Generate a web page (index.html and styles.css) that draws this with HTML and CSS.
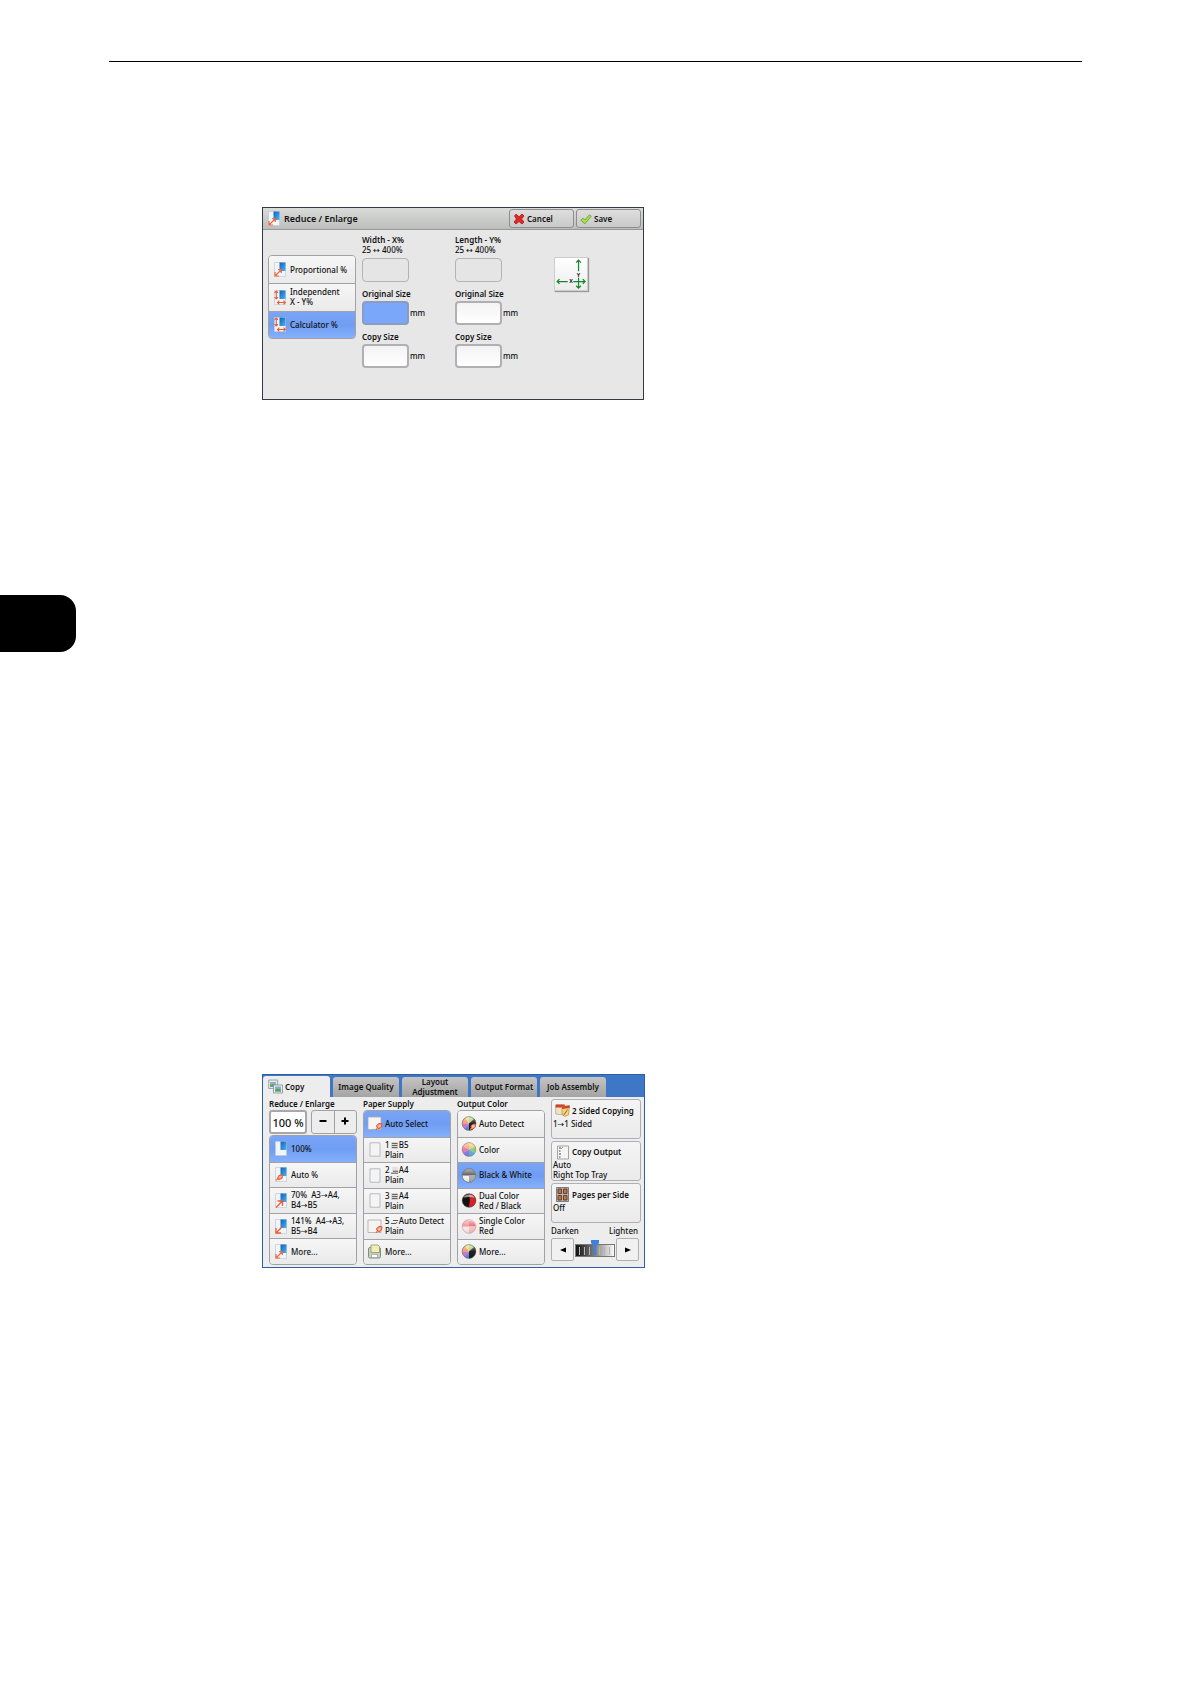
FILE: index.html
```html
<!DOCTYPE html>
<html lang="en">
<head>
<meta charset="utf-8">
<meta name="viewport" content="width=device-width, initial-scale=1">
<title>Reduce / Enlarge</title>
<link rel="stylesheet" href="styles.css">
</head>
<body>
<svg class="defs" aria-hidden="true">
  <defs>
    <linearGradient id="g-blue" x1="0" y1="0" x2="1" y2="1"><stop offset="0" stop-color="#0b62b8"/><stop offset="1" stop-color="#4db2f2"/></linearGradient>
    <linearGradient id="g-gloss" x1="0" y1="0" x2="0" y2="1"><stop offset="0" stop-color="#fff" stop-opacity=".6"/><stop offset=".5" stop-color="#fff" stop-opacity=".05"/><stop offset="1" stop-color="#000" stop-opacity=".1"/></linearGradient>
    <symbol id="page" viewBox="0 0 12 15"><path d="M.5.500h11v14H.5z" fill="#f1f5f9" stroke="#c3c9d0" stroke-width=".7"/><path d="M5.500.5h6v8.500h-6z" fill="url(#g-blue)"/></symbol>
    <symbol id="page-both" viewBox="0 0 12 15"><use href="#page"/><path d="M1.500 13.500L7 8M1 10V14H5M4 7.500H7.300V11" fill="none" stroke="#ee6a3c" stroke-width="1.200"/></symbol>
    <symbol id="page-up" viewBox="0 0 12 15"><use href="#page"/><path d="M1 14.500L7 8.500M2.500 8H7.500V13" fill="none" stroke="#ee5a30" stroke-width="1.300"/></symbol>
    <symbol id="page-down" viewBox="0 0 12 15"><use href="#page"/><path d="M7.500 7.500L1.500 13.500M1 9V14H6" fill="none" stroke="#ee5a30" stroke-width="1.300"/></symbol>
    <symbol id="page-auto" viewBox="0 0 12 15"><use href="#page"/><path d="M1 13.500L3 11M2.500 11.500L4 8.500 7.500 8 7 11 4 12.500z" fill="#f7b09a" stroke="#e8603c" stroke-width="1.200"/></symbol>
    <symbol id="page-xy" viewBox="0 0 12 15"><use href="#page"/><path d="M2.300 1V9M.6 2.800L2.300 1 4 2.800M.6 7.200L2.300 9 4 7.200M3.500 12.500H11.300M5.300 10.700L3.500 12.500 5.300 14.300M9.500 10.700L11.300 12.500 9.500 14.300" fill="none" stroke="#ee5a30" stroke-width="1.100"/></symbol>
    <symbol id="sheet" viewBox="0 0 15 15"><path d="M2.500.8h10v13.400h-10z" fill="#f4f4f4" stroke="#a9adb2" stroke-width=".8"/></symbol>
    <symbol id="sheet-auto" viewBox="0 0 15 15"><path d="M.5 1h13v12.500H.5z" fill="#f6f4f2" stroke="#a9a9a9" stroke-width=".8"/><path d="M8.500 14L10 11.500M9 9.500L11.500 7.500 14.500 7.800 14 11 11.500 13 9.500 11.500z" fill="#f49a80" stroke="#e4552e"/><path d="M11 11L13 9" stroke="#fff" stroke-width=".8"/></symbol>
    <symbol id="sheet-more" viewBox="0 0 15 15"><rect x="1" y="3.500" width="12" height="10.500" rx="1.500" fill="#c3d3c3" stroke="#7e8d80"/><path d="M3.500 1h7l1.500 1.500v6H3.500z" fill="#f2edb0" stroke="#8b9377" stroke-width=".8"/><path d="M4 10.500h6v3H4z" fill="#fff" stroke="#8b9377" stroke-width=".6"/></symbol>
    <symbol id="tray" viewBox="0 0 7 7"><path d="M0 0h7v7H0z" fill="#d4d4d4"/><path d="M1 1.500h5.500M1 3.500h5.500M1 5.500h5.500" stroke="#666"/></symbol>
    <symbol id="tray-low" viewBox="0 0 7 7"><path d="M1 0h6v6H1z" fill="#e2e2e2"/><path d="M0 6.200h7M2 4.200h5" stroke="#555"/></symbol>
    <symbol id="bypass" viewBox="0 0 7 7"><path d="M2 2.500h5M0 5.500h5L6 4" fill="none" stroke="#555"/></symbol>
    <symbol id="wheel" viewBox="0 0 16 16"><path d="M8 8V.5A7.500 7.500 0 0 1 14.500 4.300z" fill="#efc65a"/><path d="M8 8L14.500 4.300A7.500 7.500 0 0 1 14.500 11.700z" fill="#8ace6a"/><path d="M8 8L14.500 11.700A7.500 7.500 0 0 1 8 15.500z" fill="#58b2e6"/><path d="M8 8V15.500A7.500 7.500 0 0 1 1.500 11.700z" fill="#8d7be0"/><path d="M8 8L1.500 11.700A7.500 7.500 0 0 1 1.500 4.300z" fill="#ee6fae"/><path d="M8 8L1.500 4.300A7.500 7.500 0 0 1 8 .5z" fill="#f09a6e"/></symbol>
    <symbol id="wheel-warm" viewBox="0 0 16 16"><path d="M8 8L.5 8A7.500 7.500 0 0 1 4 1.700z" fill="#f08f5c"/><path d="M8 8L4 1.700A7.500 7.500 0 0 1 8 .5z" fill="#f2d45c"/><path d="M8 8V.5A7.500 7.500 0 0 1 13.500 3z" fill="#9ad06a"/><path d="M8 8L.5 8A7.500 7.500 0 0 0 3 13.500z" fill="#d86fc0"/><path d="M8 8L3 13.500A7.500 7.500 0 0 0 8 15.500z" fill="#6a86e0"/></symbol>
    <symbol id="color" viewBox="0 0 16 16"><use href="#wheel"/><circle cx="8" cy="8" r="7.300" fill="url(#g-gloss)" stroke="#8d8580" stroke-width=".6"/></symbol>
    <symbol id="color-black" viewBox="0 0 16 16"><use href="#wheel-warm"/><path d="M8 8L13.500 3A7.500 7.500 0 0 1 8 15.500z" fill="#151515"/><circle cx="8" cy="8" r="7.300" fill="url(#g-gloss)" stroke="#666" stroke-width=".6"/></symbol>
    <symbol id="color-auto" viewBox="0 0 16 16"><use href="#wheel-warm"/><path d="M8 8L13.500 3A7.500 7.500 0 0 1 8 15.500z" fill="#151515"/><circle cx="8" cy="8" r="7.300" fill="url(#g-gloss)" stroke="#666" stroke-width=".6"/><path d="M9 14.500L10.500 12 10 10.500 13 8.500 15 9 14.500 12 12 13.500z" fill="#fbc39a" stroke="#d8502c" stroke-width=".9"/></symbol>
    <symbol id="bw" viewBox="0 0 16 16"><circle cx="8" cy="8" r="7.300" fill="#f5f5f5"/><path d="M.7 8A7.300 7.300 0 0 1 15.300 8z" fill="#555"/><path d="M8 8h7.300A7.300 7.300 0 0 1 8 15.300z" fill="#aaa"/><circle cx="8" cy="8" r="7.300" fill="url(#g-gloss)" stroke="#666" stroke-width=".7"/></symbol>
    <symbol id="dual" viewBox="0 0 16 16"><circle cx="8" cy="8" r="7.300" fill="#101010"/><path d="M9 7h6.300A7.300 7.300 0 0 1 8 15.300z" fill="#df1c22"/><path d="M8 .7A7.300 7.300 0 0 1 15.300 8L9 8z" fill="#c8262a"/><path d="M2 5A7 7 0 0 1 14 5Q8 3.500 2 5z" fill="#fff" opacity=".55"/><circle cx="8" cy="8" r="7.300" fill="none" stroke="#555" stroke-width=".6"/></symbol>
    <symbol id="single" viewBox="0 0 16 16"><circle cx="8" cy="8" r="7.300" fill="#fbe9e8"/><path d="M.7 8A7.300 7.300 0 0 1 8 .7L8 8z" fill="#ef8d90"/><path d="M8 2a7 7 0 0 1 7.300 6H8z" fill="#e6666c"/><path d="M8 8h7.300A7.300 7.300 0 0 1 8 15.300z" fill="#f6c3c3"/><circle cx="8" cy="8" r="7.300" fill="url(#g-gloss)" stroke="#c98e8e" stroke-width=".6"/></symbol>
  </defs>
</svg>

<hr class="page-rule">

<main>
  <section class="panel dialog" aria-label="Reduce / Enlarge">
    <header class="dialog-bar">
      <svg class="icon-page" aria-hidden="true"><use href="#page-both"/></svg>
      <h1>Reduce / Enlarge</h1>
      <button type="button" class="bar-button">
        <svg viewBox="0 0 12 12" aria-hidden="true"><path d="M1.500 3L3 1.200 6 3.800 9 1 11 3 8.500 6 11 9 9 11 6 8.500 3 11 1 9 3.500 6z" fill="#e02a2a" stroke="#a81414" stroke-width=".8"/></svg>Cancel
      </button>
      <button type="button" class="bar-button">
        <svg viewBox="0 0 12 12" aria-hidden="true"><path d="M.8 7.200L3 5.200 4.700 7 9.500 1.800 11.300 3.200 4.800 10.800z" fill="#a6e04a" stroke="#5f9c20" stroke-width=".8"/></svg>Save
      </button>
    </header>
    <div class="dialog-body">
      <div class="list mode-list">
        <button type="button" class="item"><svg class="icon-page" aria-hidden="true"><use href="#page-both"/></svg><span>Proportional %</span></button>
        <button type="button" class="item"><svg class="icon-page" aria-hidden="true"><use href="#page-xy"/></svg><span>Independent<br>X - Y%</span></button>
        <button type="button" class="item selected" aria-pressed="true"><svg class="icon-page" aria-hidden="true"><use href="#page-xy"/></svg><span>Calculator %</span></button>
      </div>
      <div class="measures">
        <div class="field"><label for="wx">Width - X%</label><span>25 <span class="arrow">↔</span> 400%</span><input id="wx" class="readout" readonly></div>
        <div class="field"><label for="wo">Original Size</label><div class="with-unit"><input id="wo" class="active"><span>mm</span></div></div>
        <div class="field"><label for="wc">Copy Size</label><div class="with-unit"><input id="wc"><span>mm</span></div></div>
      </div>
      <div class="measures">
        <div class="field"><label for="ly">Length - Y%</label><span>25 <span class="arrow">↔</span> 400%</span><input id="ly" class="readout" readonly></div>
        <div class="field"><label for="lo">Original Size</label><div class="with-unit"><input id="lo"><span>mm</span></div></div>
        <div class="field"><label for="lc">Copy Size</label><div class="with-unit"><input id="lc"><span>mm</span></div></div>
      </div>
      <svg class="axes" viewBox="0 0 34 34" role="img" aria-label="X and Y directions">
        <path d="M25 2V14M25 21V32M22.500 5L25 2.300 27.500 5M22.500 29.500L25 32 27.500 29.500M2 25H13.500M19.500 25H32M4.800 22.500L2.300 25 4.800 27.500M29.500 22.500L32 25 29.500 27.500" fill="none" stroke="#16862e" stroke-width="1.300"/>
        <text x="25" y="20" text-anchor="middle">Y</text><text x="17" y="27" text-anchor="middle">X</text>
      </svg>
    </div>
  </section>

  <div class="thumb-index"></div>

  <section class="panel copy" aria-label="Copy">
    <nav class="tabs">
      <button type="button" class="tab current" aria-current="page">
        <svg viewBox="0 0 15 15" aria-hidden="true"><path d="M.7 1h9v8.500h-9z" fill="#e4e8ea" stroke="#8c969c" stroke-width=".8"/><path d="M2 3h6v5H2z" fill="#86b3cf"/><path d="M2 6l3-1 3 2v1H2z" fill="#6aa05a"/><path d="M5.500 6h9v8h-9z" fill="#eef0f0" stroke="#7d8a90" stroke-width=".8"/><path d="M7 7.500h6v5H7z" fill="#7cb1d4"/><path d="M7 11l3-1.500 3 1.500v1.500H7z" fill="#5f9a4e"/></svg>Copy</button>
      <button type="button" class="tab">Image Quality</button>
      <button type="button" class="tab">Layout<br>Adjustment</button>
      <button type="button" class="tab">Output Format</button>
      <button type="button" class="tab">Job Assembly</button>
    </nav>
    <div class="copy-body">
      <section class="column">
        <h2><label for="ratio">Reduce / Enlarge</label></h2>
        <div class="ratio">
          <input id="ratio" value="100 %">
          <div class="stepper"><button type="button" aria-label="Decrease"><svg viewBox="0 0 8 8" aria-hidden="true"><path d="M.5 4h7"/></svg></button><button type="button" aria-label="Increase"><svg viewBox="0 0 8 8" aria-hidden="true"><path d="M.5 4h7M4 .5v7"/></svg></button></div>
        </div>
        <div class="list">
          <button type="button" class="item selected" aria-pressed="true"><svg class="icon-page" aria-hidden="true"><use href="#page"/></svg><span>100%</span></button>
          <button type="button" class="item"><svg class="icon-page" aria-hidden="true"><use href="#page-auto"/></svg><span>Auto %</span></button>
          <button type="button" class="item"><svg class="icon-page" aria-hidden="true"><use href="#page-up"/></svg><span>70%&nbsp; A3<span class="arrow">→</span>A4,<br>B4<span class="arrow">→</span>B5</span></button>
          <button type="button" class="item"><svg class="icon-page" aria-hidden="true"><use href="#page-down"/></svg><span>141%&nbsp; A4<span class="arrow">→</span>A3,<br>B5<span class="arrow">→</span>B4</span></button>
          <button type="button" class="item"><svg class="icon-page" aria-hidden="true"><use href="#page-both"/></svg><span>More...</span></button>
        </div>
      </section>
      <section class="column">
        <h2>Paper Supply</h2>
        <div class="list square">
          <button type="button" class="item selected" aria-pressed="true"><svg aria-hidden="true"><use href="#sheet-auto"/></svg><span>Auto Select</span></button>
          <button type="button" class="item"><svg aria-hidden="true"><use href="#sheet"/></svg><span>1 <svg class="tray" aria-hidden="true"><use href="#tray"/></svg> B5<br>Plain</span></button>
          <button type="button" class="item"><svg aria-hidden="true"><use href="#sheet"/></svg><span>2 <svg class="tray" aria-hidden="true"><use href="#tray-low"/></svg> A4<br>Plain</span></button>
          <button type="button" class="item"><svg aria-hidden="true"><use href="#sheet"/></svg><span>3 <svg class="tray" aria-hidden="true"><use href="#tray"/></svg> A4<br>Plain</span></button>
          <button type="button" class="item"><svg aria-hidden="true"><use href="#sheet-auto"/></svg><span>5 <svg class="tray" aria-hidden="true"><use href="#bypass"/></svg> Auto Detect<br>Plain</span></button>
          <button type="button" class="item"><svg aria-hidden="true"><use href="#sheet-more"/></svg><span>More...</span></button>
        </div>
      </section>
      <section class="column">
        <h2>Output Color</h2>
        <div class="list square">
          <button type="button" class="item"><svg aria-hidden="true"><use href="#color-auto"/></svg><span>Auto Detect</span></button>
          <button type="button" class="item"><svg aria-hidden="true"><use href="#color"/></svg><span>Color</span></button>
          <button type="button" class="item selected" aria-pressed="true"><svg aria-hidden="true"><use href="#bw"/></svg><span>Black &amp; White</span></button>
          <button type="button" class="item"><svg aria-hidden="true"><use href="#dual"/></svg><span>Dual Color<br>Red / Black</span></button>
          <button type="button" class="item"><svg aria-hidden="true"><use href="#single"/></svg><span>Single Color<br>Red</span></button>
          <button type="button" class="item"><svg aria-hidden="true"><use href="#color-black"/></svg><span>More...</span></button>
        </div>
      </section>
      <section class="options">
        <button type="button" class="card">
          <span class="card-title"><svg viewBox="0 0 15 15" aria-hidden="true"><path d="M.7 2h9v10l-9-1z" fill="#f4e3c0" stroke="#a89c88" stroke-width=".7"/><path d="M.7 1.500h9v3h-9z" fill="#d0402c"/><path d="M7 3.500l7.500-1-1 9.500-4 1.500L7 11z" fill="#f3d876" stroke="#a89048" stroke-width=".7"/><path d="M7 3.500l7.500-1v2.500L7 6z" fill="#d0402c"/><path d="M8.500 12.500l4-6" stroke="#c0512c"/></svg>2 Sided Copying</span>
          <span>1<span class="arrow">→</span>1 Sided</span>
        </button>
        <button type="button" class="card">
          <span class="card-title"><svg viewBox="0 0 15 15" aria-hidden="true"><path d="M2.500 1h11v13h-11z" fill="#f5f5f5" stroke="#8f8f8f" stroke-width=".8"/><path d="M4 3h2M4 6h1.500M4 9h2M4 12h1.500M7.500 2.500l-1 1" stroke="#444"/></svg>Copy Output</span>
          <span>Auto<br>Right Top Tray</span>
        </button>
        <button type="button" class="card">
          <span class="card-title"><svg viewBox="0 0 15 15" aria-hidden="true"><path d="M1.500.5h12v14h-12z" fill="#b9b5b0" stroke="#666" stroke-width=".8"/><path d="M3 2h3.500v4.500H3zM8.500 2H12v4.500H8.500zM3 8.500h3.500V13H3zM8.500 8.500H12V13H8.500z" fill="#c9703a" stroke="#513c30" stroke-width=".9"/></svg>Pages per Side</span>
          <span>Off</span>
        </button>
        <div class="density">
          <label for="density">Darken</label><span>Lighten</span>
        </div>
        <div class="density-control">
          <button type="button" aria-label="Darker"><svg viewBox="0 0 6 6" aria-hidden="true"><path d="M6 .5v5L0 3z"/></svg></button>
          <input type="range" id="density" min="0" max="6" value="3">
          <button type="button" aria-label="Lighter"><svg viewBox="0 0 6 6" aria-hidden="true"><path d="M0 .5v5L6 3z"/></svg></button>
        </div>
      </section>
    </div>
  </section>
</main>
</body>
</html>
```
FILE: styles.css
```css
* {
  box-sizing: border-box;
}

body {
  margin: 0;
  min-height: 100vh;
  background: #fff;
  color: #111;
  font: 500 8px/10px "Noto Sans", "Open Sans", sans-serif;
}

button,
input {
  margin: 0;
  padding: 0;
  border: 0;
  color: inherit;
  font: inherit;
}

h1,
h2 {
  margin: 0;
}

svg {
  flex: none;
}

.defs {
  display: block;
  width: 0;
  height: 0;
}

.page-rule {
  margin: 61px 108px 145px 109px;
  border: 0;
  border-top: 1px solid #000;
}

.panel {
  margin-left: 262px;
  background: #e7e7e7;
  border: 1px solid #343a44;
}

.thumb-index {
  width: 76px;
  height: 57px;
  margin: 195px 0 422px;
  background: #000;
  border-radius: 0 16px 16px 0;
}

.arrow {
  font-family: "DejaVu Sans", sans-serif;
  line-height: 1;
}

/* Shared button list */

.list {
  display: grid;
  grid-auto-rows: 1fr;
  overflow: hidden;
  border: 1px solid #a2a2a6;
  border-radius: 4px;
}

.item {
  display: flex;
  align-items: center;
  gap: 4px;
  padding-left: 5px;
  background: linear-gradient(#f6f6f6, #eaeaea);
  text-align: left;
  white-space: nowrap;
}

.item + .item {
  border-top: 1px solid #a2a2a6;
}

.item.selected {
  background: linear-gradient(#7aa5f7, #6f9df2 50%, #85b0fc);
}

.icon-page {
  width: 12px;
  height: 15px;
}

/* Reduce / Enlarge dialog */

.dialog {
  max-width: 382px;
  height: 193px;
}

.dialog-bar {
  display: flex;
  align-items: center;
  gap: 2px;
  height: 22px;
  padding: 0 2px 0 5px;
  background: linear-gradient(#dadcda, #bcbebc);
  border-bottom: 1px solid #999;
}

.dialog-bar h1 {
  flex: 1;
  padding-left: 2px;
  font-size: 9px;
  font-weight: 600;
}

.bar-button {
  display: flex;
  align-items: center;
  gap: 2px;
  width: 65px;
  height: 19px;
  padding-left: 3px;
  background: linear-gradient(#dedede, #c9c9c9);
  border: 1px solid #8e8e8e;
  border-radius: 3px;
  font-weight: 600;
}

.bar-button svg {
  width: 12px;
  height: 12px;
}

.dialog-body {
  display: flex;
  padding: 5px;
}

.mode-list {
  width: 88px;
  height: 84px;
  margin: 20px 6px 0 0;
}

.measures {
  display: flex;
  flex-direction: column;
  gap: 7px;
  width: 93px;
}

.field {
  display: flex;
  flex-direction: column;
}

.field label {
  font-weight: 600;
}

.field input {
  width: 47px;
  height: 24px;
  background: linear-gradient(#f3f3f3, #fff);
  border: 2px solid #b0b0b4;
  border-radius: 4px;
}

.field .readout {
  margin-top: 3px;
  background: #e5e5e5;
  border: 1px solid #b4b4b8;
}

.field .active {
  background: #7ba7fb;
  border-color: #8a9cc0;
}

.with-unit {
  display: flex;
  align-items: center;
  gap: 1px;
  padding-top: 2px;
}

.axes {
  width: 34px;
  height: 34px;
  margin: 22px 0 0 6px;
  background: linear-gradient(#fff, #ececec);
  border: 1px solid #ccc;
  box-shadow: 1px 1px 1px #999;
}

.axes text {
  font-size: 6px;
  font-weight: 600;
}

/* Copy screen */

.copy {
  display: flex;
  flex-direction: column;
  max-width: 383px;
  height: 194px;
  background: #ededed;
  border-color: #2e5ea6;
}

.tabs {
  display: flex;
  align-items: flex-end;
  gap: 3px;
  height: 22px;
  background: #3d77c6;
}

.tab {
  width: 66px;
  height: 20px;
  background: linear-gradient(#c4c4c4, #a4a4a4);
  border-radius: 3px 3px 0 0;
  font-weight: 600;
  white-space: nowrap;
}

.tab.current {
  display: flex;
  align-items: center;
  gap: 2px;
  width: 67px;
  height: 21px;
  padding-left: 5px;
  background: #ededed;
}

.tab svg {
  width: 15px;
  height: 15px;
}

.copy-body {
  display: flex;
  flex: 1;
  gap: 6px;
  padding: 2px 3px 2px 6px;
}

.column {
  display: flex;
  flex: none;
  flex-direction: column;
  gap: 1px;
  width: 88px;
}

.column h2 {
  font-size: 8px;
  font-weight: 600;
}

.column .list {
  flex: 1;
}

.square .item {
  gap: 2px;
  padding-left: 3px;
}

.square .item > svg {
  width: 16px;
  height: 15px;
}

.item .tray {
  width: 7px;
  height: 7px;
  margin: 0 -1px;
  vertical-align: -1px;
}

.ratio {
  display: flex;
  gap: 4px;
  height: 24px;
}

.ratio input {
  width: 38px;
  background: #fff;
  border: 2px solid #a8a8ac;
  border-radius: 3px;
  font-size: 11px;
  text-align: center;
}

.stepper {
  display: flex;
  flex: 1;
  border: 1px solid #a2a2a6;
  border-radius: 3px;
}

.stepper button {
  flex: 1;
  background: none;
}

.stepper button + button {
  border-left: 1px solid #a2a2a6;
}

.stepper svg {
  width: 8px;
  height: 8px;
  stroke: #000;
  stroke-width: 2;
}

.options {
  display: flex;
  flex: 1;
  flex-direction: column;
  gap: 2px;
  min-width: 0;
}

.card {
  display: flex;
  flex-direction: column;
  height: 40px;
  padding: 2px 0 0 1px;
  background: linear-gradient(#f4f4f4, #ebebeb);
  border: 1px solid #b0b0b4;
  border-radius: 3px;
  text-align: left;
  white-space: nowrap;
}

.card-title {
  display: flex;
  align-items: center;
  gap: 2px;
  height: 17px;
  padding-left: 2px;
  font-weight: 600;
}

.card-title svg {
  width: 15px;
  height: 15px;
}

.density {
  display: flex;
  justify-content: space-between;
  padding: 1px 3px 0 0;
}

.density-control {
  display: flex;
  align-items: center;
  padding-right: 2px;
}

.density-control button {
  flex: none;
  width: 23px;
  height: 23px;
  background: #f1f1f1;
  border: 1px solid #b0b0b4;
  border-radius: 2px;
}

.density-control svg {
  width: 6px;
  height: 6px;
}

.density-control input {
  flex: 1;
  min-width: 0;
  height: 18px;
  margin: 2px 1px 0;
  appearance: none;
  background: none;
}

.density-control input::-webkit-slider-runnable-track {
  height: 13px;
  background:
    repeating-linear-gradient(90deg, transparent 0 3px, #b4b4b4 3px 4px, transparent 4px 5px) 0 2px / 100% 8px no-repeat,
    linear-gradient(90deg, #111, #777 45%, #fafafa);
  border: 1px solid #777;
}

.density-control input::-webkit-slider-thumb {
  width: 8px;
  height: 15px;
  margin-top: -5px;
  appearance: none;
  background: #3f7fe0;
  clip-path: polygon(0 0, 100% 0, 100% 20%, 65% 40%, 65% 100%, 35% 100%, 35% 40%, 0 20%);
}
```
